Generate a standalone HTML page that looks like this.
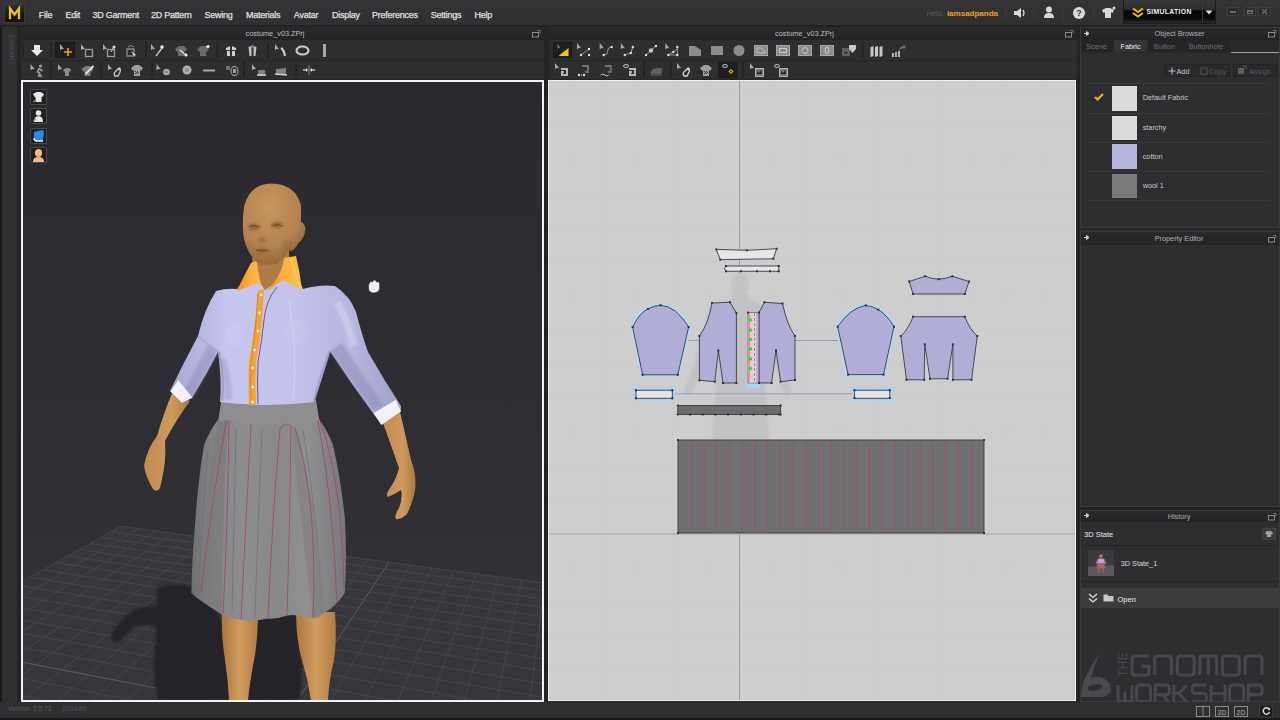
<!DOCTYPE html>
<html><head><meta charset="utf-8">
<style>
*{margin:0;padding:0;box-sizing:border-box}
html,body{width:1280px;height:720px;overflow:hidden;background:#2c2c2f;font-family:"Liberation Sans",sans-serif;color:#ddd}
.a{position:absolute}
.t{position:absolute;white-space:nowrap;line-height:1}

</style></head><body>
<div class="a" style="left:0px;top:0px;width:1280px;height:720px;background:#2a2a2d;"></div>
<div class="a" style="left:0px;top:0px;width:1280px;height:25px;background:linear-gradient(#343437,#303033);"></div>
<div class="a" style="left:0px;top:25px;width:1280px;height:2px;background:#232326;"></div>
<div class="a" style="left:4px;top:3px;width:21px;height:20px;background:linear-gradient(#333336,#1a1a1c 45%,#111113);border:1px solid #3c3c3e;"></div>
<svg class="a" style="left:4px;top:3px" width="21" height="20"><path d="M6 15 V5.5 L10.5 11.5 L15 5.5 V15" fill="none" stroke="#f4b82a" stroke-width="2.3" stroke-linejoin="miter" stroke-linecap="square"/></svg>
<span class="t" style="left:38.7px;top:10.68px;font-size:9px;color:#ececec;letter-spacing:-0.25px;-webkit-text-stroke:0.25px #d8d8d8;">File</span>
<span class="t" style="left:65.5px;top:10.68px;font-size:9px;color:#ececec;letter-spacing:-0.25px;-webkit-text-stroke:0.25px #d8d8d8;">Edit</span>
<span class="t" style="left:92.5px;top:10.68px;font-size:9px;color:#ececec;letter-spacing:-0.25px;-webkit-text-stroke:0.25px #d8d8d8;">3D Garment</span>
<span class="t" style="left:151px;top:10.68px;font-size:9px;color:#ececec;letter-spacing:-0.25px;-webkit-text-stroke:0.25px #d8d8d8;">2D Pattern</span>
<span class="t" style="left:204.5px;top:10.68px;font-size:9px;color:#ececec;letter-spacing:-0.25px;-webkit-text-stroke:0.25px #d8d8d8;">Sewing</span>
<span class="t" style="left:246px;top:10.68px;font-size:9px;color:#ececec;letter-spacing:-0.25px;-webkit-text-stroke:0.25px #d8d8d8;">Materials</span>
<span class="t" style="left:293.8px;top:10.68px;font-size:9px;color:#ececec;letter-spacing:-0.25px;-webkit-text-stroke:0.25px #d8d8d8;">Avatar</span>
<span class="t" style="left:332px;top:10.68px;font-size:9px;color:#ececec;letter-spacing:-0.25px;-webkit-text-stroke:0.25px #d8d8d8;">Display</span>
<span class="t" style="left:372px;top:10.68px;font-size:9px;color:#ececec;letter-spacing:-0.25px;-webkit-text-stroke:0.25px #d8d8d8;">Preferences</span>
<span class="t" style="left:430.8px;top:10.68px;font-size:9px;color:#ececec;letter-spacing:-0.25px;-webkit-text-stroke:0.25px #d8d8d8;">Settings</span>
<span class="t" style="left:474.5px;top:10.68px;font-size:9px;color:#ececec;letter-spacing:-0.25px;-webkit-text-stroke:0.25px #d8d8d8;">Help</span>
<span class="t" style="left:926.5px;top:10.74px;font-size:6.8px;color:#5c5c5e;">Hello,</span>
<span class="t" style="left:946.9px;top:10.03px;font-size:8px;color:#f0a020;font-weight:bold;">iamsadpanda</span>
<div class="a" style="left:1005px;top:6px;width:1px;height:14px;background:#39393c;"></div>
<div class="a" style="left:1033px;top:6px;width:1px;height:14px;background:#39393c;"></div>
<div class="a" style="left:1063px;top:6px;width:1px;height:14px;background:#39393c;"></div>
<div class="a" style="left:1093px;top:6px;width:1px;height:14px;background:#39393c;"></div>
<svg class="a" style="left:1012px;top:5px" width="16" height="16"><path d="M2 6h3l4-3v10l-4-3H2z" fill="#d8d8d8"/><path d="M11 5q2 3 0 6" stroke="#d8d8d8" fill="none" stroke-width="1.3"/></svg>
<svg class="a" style="left:1041px;top:4px" width="16" height="16"><circle cx="8" cy="5.5" r="3" fill="#d8d8d8"/><path d="M3 14q0-5 5-5t5 5z" fill="#d8d8d8"/></svg>
<svg class="a" style="left:1071px;top:5px" width="16" height="16"><circle cx="8" cy="8" r="6" fill="#d8d8d8"/><text x="8" y="11.3" font-size="9" font-weight="bold" text-anchor="middle" fill="#333" font-family="Liberation Sans">?</text></svg>
<svg class="a" style="left:1099px;top:5px" width="18" height="16"><path d="M3 5l4-2h4l4 2-1.5 3-1.5-.8V13H6V7.2l-1.5.8z" fill="#d8d8d8"/><circle cx="15" cy="3" r="1.5" fill="#d8d8d8"/></svg>
<div class="a" style="left:1123px;top:0px;width:93px;height:24px;background:linear-gradient(#38383b 0%,#2e2e31 40%,#050505 48%,#0a0a0a 80%,#2a2a2d 100%);border:1px solid #1c1c1e;border-top:none;"></div>
<div class="a" style="left:1202px;top:1px;width:1px;height:22px;background:#3a3a3d;"></div>
<svg class="a" style="left:1131px;top:7px" width="14" height="12"><path d="M2 1.5l5 3.5 5-3.5M2 6l5 3.5 5-3.5" fill="none" stroke="#f2b01e" stroke-width="2"/></svg>
<span class="t" style="left:1146.4px;top:9.44px;font-size:6.8px;color:#f2f2f2;font-weight:bold;letter-spacing:0.35px;">SIMULATION</span>
<svg class="a" style="left:1204px;top:9px" width="10" height="8"><path d="M1.5 1.5h7l-3.5 4z" fill="#ddd"/></svg>
<div class="a" style="left:1226.5px;top:7px;width:12.5px;height:9px;background:#2c2c2f;border:1px solid #3e3e41;"></div>
<div class="a" style="left:1243.5px;top:7px;width:12.5px;height:9px;background:#2c2c2f;border:1px solid #3e3e41;"></div>
<div class="a" style="left:1258px;top:7px;width:12.5px;height:9px;background:#2c2c2f;border:1px solid #3e3e41;"></div>
<div class="a" style="left:1229.5px;top:11px;width:6.5px;height:1.5px;background:#6a6a6c;"></div>
<div class="a" style="left:1246.5px;top:9.5px;width:6.5px;height:4.5px;background:transparent;border:1px solid #6a6a6c;border-top-width:2px;"></div>
<svg class="a" style="left:1258px;top:7px" width="13" height="9"><path d="M4 2l5 5M9 2l-5 5" stroke="#6a6a6c" stroke-width="1.2"/></svg>
<div class="a" style="left:0px;top:27px;width:2px;height:675px;background:#1b1b1d;"></div>
<div class="a" style="left:2px;top:27px;width:15px;height:675px;background:#303033;"></div>
<div class="a" style="left:17px;top:27px;width:4px;height:675px;background:#242427;"></div>
<span class="t" style="left:-8px;top:35px;font-size:6.8px;color:#4c4c4f;transform:rotate(90deg);transform-origin:left top;left:14px;letter-spacing:0.2px">LIBRARY</span>
<div class="a" style="left:21px;top:27px;width:523px;height:13px;background:linear-gradient(#2a2a2d,#232326);"></div>
<span class="t" style="left:175px;width:200px;text-align:center;top:30.12px;font-size:7.3px;color:#bcbcbe;">costume_v03.ZPrj</span>
<svg class="a" style="left:531px;top:29px" width="10" height="9"><rect x="1.5" y="3.5" width="6" height="4.5" fill="none" stroke="#8a8a8c"/><path d="M6 1.5h3v3" stroke="#8a8a8c" fill="none" stroke-width="0.8"/></svg>
<div class="a" style="left:548px;top:27px;width:529px;height:13px;background:linear-gradient(#2a2a2d,#232326);"></div>
<span class="t" style="left:704.5px;width:200px;text-align:center;top:30.12px;font-size:7.3px;color:#bcbcbe;">costume_v03.ZPrj</span>
<svg class="a" style="left:1064px;top:29px" width="10" height="9"><rect x="1.5" y="3.5" width="6" height="4.5" fill="none" stroke="#8a8a8c"/><path d="M6 1.5h3v3" stroke="#8a8a8c" fill="none" stroke-width="0.8"/></svg>
<div class="a" style="left:544px;top:27px;width:4px;height:675px;background:#242427;"></div>
<div class="a" style="left:1077px;top:27px;width:3px;height:675px;background:#242427;"></div>
<div class="a" style="left:21px;top:40px;width:523px;height:20px;background:#2e2e31;"></div>
<div class="a" style="left:21px;top:60px;width:523px;height:1px;background:#262629;"></div>
<div class="a" style="left:21px;top:61px;width:523px;height:18px;background:#2e2e31;"></div>
<div class="a" style="left:21px;top:79px;width:523px;height:1px;background:#262629;"></div>
<div class="a" style="left:22px;top:42px;width:2px;height:16px;background:#252528;"></div>
<div class="a" style="left:50px;top:42px;width:2px;height:16px;background:#252528;"></div>
<div class="a" style="left:145px;top:42px;width:2px;height:16px;background:#252528;"></div>
<div class="a" style="left:216px;top:42px;width:2px;height:16px;background:#252528;"></div>
<div class="a" style="left:267px;top:42px;width:2px;height:16px;background:#252528;"></div>
<div class="a" style="left:50px;top:62px;width:2px;height:16px;background:#252528;"></div>
<div class="a" style="left:100px;top:62px;width:2px;height:16px;background:#252528;"></div>
<div class="a" style="left:151px;top:62px;width:2px;height:16px;background:#252528;"></div>
<div class="a" style="left:243px;top:62px;width:2px;height:16px;background:#252528;"></div>
<div class="a" style="left:295px;top:62px;width:2px;height:16px;background:#252528;"></div>
<div class="a" style="left:548px;top:40px;width:529px;height:20px;background:#2e2e31;"></div>
<div class="a" style="left:548px;top:60px;width:529px;height:1px;background:#262629;"></div>
<div class="a" style="left:548px;top:61px;width:529px;height:18px;background:#2e2e31;"></div>
<div class="a" style="left:548px;top:79px;width:529px;height:1px;background:#262629;"></div>
<div class="a" style="left:548px;top:42px;width:2px;height:16px;background:#252528;"></div>
<div class="a" style="left:862px;top:42px;width:2px;height:16px;background:#252528;"></div>
<div class="a" style="left:548px;top:62px;width:2px;height:16px;background:#252528;"></div>
<div class="a" style="left:642.5px;top:62px;width:2px;height:16px;background:#252528;"></div>
<div class="a" style="left:670px;top:62px;width:2px;height:16px;background:#252528;"></div>
<div class="a" style="left:742px;top:62px;width:2px;height:16px;background:#252528;"></div>
<svg class="a" style="left:0;top:38px" width="1280" height="44" viewBox="0 38 1280 44">
<rect x="55.5" y="42.5" width="19" height="15" fill="#1f1f21" stroke="#18181a"/>
<rect x="553.5" y="42.5" width="18" height="15" fill="#1f1f21" stroke="#18181a"/>
<rect x="719" y="62.5" width="18" height="15" fill="#1f1f21" stroke="#18181a"/>
<g transform="translate(29,42)"><path d="M5 3h6v5h3l-6 6-6-6h3z" fill="#e8e8e8"/></g>
<g transform="translate(57,42)"><path d="M3 2 l0 6.5 l1.6 -1.5 l2.6 0.3z" fill="#a8a8aa"/><path d="M11 6v8M7 10h8" stroke="#f0a010" stroke-width="1.6"/></g>
<g transform="translate(79,42)"><path d="M2 2 l0 6.5 l1.6 -1.5 l2.6 0.3z" fill="#a8a8aa"/><rect x="6.5" y="7.5" width="7" height="7" fill="none" stroke="#9a9a9c" stroke-width="1.3"/></g>
<g transform="translate(101,42)"><path d="M2 2 l0 6.5 l1.6 -1.5 l2.6 0.3z" fill="#a8a8aa"/><rect x="6.5" y="7.5" width="7" height="7" fill="none" stroke="#9a9a9c" stroke-width="1.3"/><circle cx="13" cy="5" r="1.6" fill="#e0e0e0"/><path d="M10 10l3-5" stroke="#ccc"/></g>
<g transform="translate(122,42)"><path d="M5 14v-7h7v7z" fill="none" stroke="#8a8a8c" stroke-width="1.3"/><path d="M9 9l5 4-2 1z" fill="#e0e0e0"/><path d="M6 5q3-3 6 0" stroke="#8a8a8c" fill="none"/></g>
<g transform="translate(149,42)"><path d="M2 2 l0 6.5 l1.6 -1.5 l2.6 0.3z" fill="#a8a8aa"/><path d="M7 14l6-8" stroke="#c8c8ca" stroke-width="1.3"/><circle cx="13" cy="5" r="1.7" fill="#f0f0f0"/></g>
<g transform="translate(173,42)"><path d="M2 7l4-3h5l3 3-2 3-1-1v5H5v-5l-1 1z" fill="#6e6e70"/><path d="M7 8l6 5" stroke="#ddd" stroke-width="1.2"/><circle cx="13" cy="13" r="1.6" fill="#f0f0f0"/></g>
<g transform="translate(195,42)"><path d="M2 7l4-3h5l3 3-2 3-1-1v5H5v-5l-1 1z" fill="#6a6a6c"/><circle cx="13" cy="4.5" r="1.6" fill="#f0f0f0"/></g>
<g transform="translate(223,42)"><path d="M3 6l4-2v4H3zM9 4l4 2v2H9zM4 9h3v5H4zM9 9h3v5H9z" fill="#d0d0d2"/></g>
<g transform="translate(244.5,42)"><path d="M4 5l3-1v10H5zM9 4l3 1-1 9H9z" fill="#c0c0c2"/><path d="M7 3h2v3H7z" fill="#808082"/></g>
<g transform="translate(273,42)"><path d="M2 2 l0 6.5 l1.6 -1.5 l2.6 0.3z" fill="#a8a8aa"/><path d="M8 6q3 2 4 8" stroke="#c8c8ca" stroke-width="2.2" fill="none"/></g>
<g transform="translate(294.5,42)"><ellipse cx="8" cy="8.5" rx="6" ry="4" fill="none" stroke="#c8c8ca" stroke-width="2.2"/></g>
<g transform="translate(316.5,42)"><rect x="6.5" y="2" width="3" height="13" fill="#a8a8aa"/></g>
<g transform="translate(29.5,62)"><path d="M1 2 l0 6.5 l1.6 -1.5 l2.6 0.3z" fill="#a8a8aa"/><circle cx="11" cy="4" r="1.6" fill="#9c9c9e"/><path d="M10 6l-2 4 2 1-1 4M10 7l3 2M9 10l3 5" stroke="#9c9c9e" stroke-width="1.6" fill="none"/></g>
<g transform="translate(57,62)"><path d="M1 2 l0 6.5 l1.6 -1.5 l2.6 0.3z" fill="#a8a8aa"/><path d="M6 8l3-2h3l2 2-1 2-1-1v5H8V9l-1 1z" fill="#8a8a8c"/></g>
<g transform="translate(79.5,62)"><path d="M2 7l4-3h5l3 3-2 3-1-1v5H5v-5l-1 1z" fill="#7a7a7c"/><path d="M6 12l8-8" stroke="#e0e0e0" stroke-width="1.8"/></g>
<g transform="translate(107,62)"><path d="M1 2 l0 6.5 l1.6 -1.5 l2.6 0.3z" fill="#a8a8aa"/><path d="M8 14q-2-3 1-5l3-3q2 1 1 4l-2 4z" fill="none" stroke="#c8c8ca" stroke-width="1.4"/></g>
<g transform="translate(129,62)"><path d="M2 6l4-3h4l4 3-2 3-1-1v6H5V8l-1 1z" fill="#a0a0a2"/><path d="M6 9h1v1H6zM8 9h1v1H8zM7 10h1v1H7zM9 10h1v1H9zM6 11h1v1H6zM8 11h1v1H8z" fill="#333"/></g>
<g transform="translate(155.5,62)"><path d="M1 2 l0 6.5 l1.6 -1.5 l2.6 0.3z" fill="#a8a8aa"/><circle cx="11" cy="10" r="3.3" fill="#a8a8aa"/><path d="M9.5 10h3" stroke="#666"/></g>
<g transform="translate(179,62)"><circle cx="8" cy="8" r="4.5" fill="#b0b0b2"/><circle cx="7" cy="7" r="0.7" fill="#666"/><circle cx="9" cy="7" r="0.7" fill="#666"/><circle cx="7" cy="9" r="0.7" fill="#666"/><circle cx="9" cy="9" r="0.7" fill="#666"/></g>
<g transform="translate(201,62)"><path d="M2 8.5h12" stroke="#a8a8aa" stroke-width="2"/></g>
<g transform="translate(224,62)"><rect x="2" y="4" width="4" height="4" fill="#707072"/><ellipse cx="10.5" cy="9" rx="3.5" ry="4.5" fill="none" stroke="#909092" stroke-width="1.3"/><rect x="9" y="7" width="3" height="4" fill="#a0a0a2"/></g>
<g transform="translate(251,62)"><path d="M1 2 l0 6.5 l1.6 -1.5 l2.6 0.3z" fill="#a8a8aa"/><path d="M7 8h7v6H7z" fill="#808082"/><path d="M6 13h9" stroke="#d0d0d2" stroke-width="1.5"/></g>
<g transform="translate(273,62)"><path d="M3 7l10-1v7H3z" fill="#808082"/><path d="M2 12l12 1" stroke="#d0d0d2" stroke-width="1.6"/></g>
<g transform="translate(301,62)"><path d="M2 8h3M11 8h3" stroke="#c0c0c2" stroke-width="1.3"/><path d="M5 6v4l2-2zM11 6v4l-2-2z" fill="#e0e0e0"/><rect x="7.3" y="3" width="1.4" height="10" fill="#707072"/></g>
<g transform="translate(554.5,42)"><path d="M3 2l0 5 1-1 2 0z" fill="#707072"/><path d="M4 14L14 6v8z" fill="#f2c80c"/></g>
<g transform="translate(576,42)"><path d="M1 1 l0 6.5 l1.6 -1.5 l2.6 0.3z" fill="#a8a8aa"/><path d="M5 13l8-6" stroke="#9a9a9c"/><circle cx="5" cy="13" r="1.2" fill="#e0e0e0"/><circle cx="13" cy="7" r="1.2" fill="#e0e0e0"/><circle cx="13" cy="13" r="1.2" fill="#e0e0e0"/></g>
<g transform="translate(598.7,42)"><path d="M1 1 l0 6.5 l1.6 -1.5 l2.6 0.3z" fill="#a8a8aa"/><path d="M5 13q4 0 4-4t4-4" stroke="#9a9a9c" fill="none"/><circle cx="5" cy="13" r="1.2" fill="#e0e0e0"/><circle cx="13" cy="5" r="1.2" fill="#e0e0e0"/></g>
<g transform="translate(619.8,42)"><path d="M1 1 l0 6.5 l1.6 -1.5 l2.6 0.3z" fill="#a8a8aa"/><path d="M5 13l6-2 2-6" stroke="#9a9a9c" fill="none"/><circle cx="5" cy="13" r="1.2" fill="#e0e0e0"/><circle cx="11" cy="11" r="1.2" fill="#e0e0e0"/><circle cx="13" cy="5" r="1.2" fill="#e0e0e0"/></g>
<g transform="translate(643,42)"><path d="M3 13l10-9" stroke="#9a9a9c"/><circle cx="8" cy="8.5" r="2.3" fill="#c0c0c2"/><circle cx="3" cy="13" r="1.2" fill="#e0e0e0"/><circle cx="13" cy="4" r="1.2" fill="#e0e0e0"/></g>
<g transform="translate(664.3,42)"><path d="M1 1 l0 6.5 l1.6 -1.5 l2.6 0.3z" fill="#a8a8aa"/><path d="M4 13h9V5" stroke="#9a9a9c" fill="none"/><path d="M4 13l9-6" stroke="#9a9a9c"/><circle cx="4" cy="13" r="1.2" fill="#e0e0e0"/><circle cx="13" cy="13" r="1.2" fill="#e0e0e0"/><circle cx="13" cy="5" r="1.2" fill="#e0e0e0"/><circle cx="9" cy="10" r="1.2" fill="#e0e0e0"/></g>
<g transform="translate(687,42)"><path d="M2 4h6l6 4v6H2z" fill="#8c8c8e"/></g>
<g transform="translate(709,42)"><rect x="2" y="4" width="12" height="9" fill="#8c8c8e"/></g>
<g transform="translate(731,42)"><circle cx="8" cy="8.5" r="5.5" fill="#8c8c8e"/></g>
<g transform="translate(753,42)"><rect x="1.5" y="3.5" width="13" height="10" fill="#8a8a8c" stroke="#a8a8aa"/><path d="M4 6h4l4 3v2H4z" fill="none" stroke="#c0c0c2"/></g>
<g transform="translate(775,42)"><rect x="1.5" y="3.5" width="13" height="10" fill="#8a8a8c" stroke="#a8a8aa"/><rect x="4.5" y="6.5" width="7" height="4" fill="none" stroke="#c8c8ca"/></g>
<g transform="translate(797,42)"><rect x="1.5" y="3.5" width="13" height="10" fill="#8a8a8c" stroke="#a8a8aa"/><circle cx="8" cy="8.5" r="3" fill="none" stroke="#c8c8ca"/></g>
<g transform="translate(819,42)"><rect x="1.5" y="3.5" width="13" height="10" fill="#8a8a8c" stroke="#a8a8aa"/><ellipse cx="8" cy="8.5" rx="1.8" ry="3.3" fill="none" stroke="#d0d0d2"/></g>
<g transform="translate(841,42)"><rect x="1" y="6" width="8" height="8" fill="#606062"/><path d="M8 3h7v4l-3.5 4L8 7z" fill="#c8c8ca"/><path d="M3 10l2 2 2-2z" fill="#222"/></g>
<g transform="translate(868.5,42)"><path d="M2 5l3-1v10l-3 1zM6.5 5l3-1v10l-3 1zM11 5l3-1v10l-3 1z" fill="#c8c8ca"/></g>
<g transform="translate(890,42)"><path d="M2 11h2v4H2zM5 10h2v5H5zM8 9h2v6H8z" fill="#b0b0b2"/><path d="M9 8q1-4 5-4l-1-2 3 3-3 3 1-2q-3 0-4 2" fill="#707072"/></g>
<g transform="translate(554,62)"><path d="M1 1 l0 6.5 l1.6 -1.5 l2.6 0.3z" fill="#a8a8aa"/><path d="M7 7h6v6H8v-3h2" stroke="#b8b8ba" stroke-width="2" fill="none"/></g>
<g transform="translate(576,62)"><path d="M6 4h6v6H9" stroke="#707072" stroke-width="2" fill="none"/><circle cx="3" cy="13" r="1.2" fill="#e0e0e0"/><circle cx="8" cy="13" r="1.2" fill="#e0e0e0"/><path d="M3 13h5" stroke="#e0e0e0" stroke-dasharray="1 1"/></g>
<g transform="translate(598.7,62)"><path d="M6 4h6v6H9" stroke="#707072" stroke-width="2" fill="none"/><path d="M2 13q2-2 4 0t4 0" stroke="#d0d0d2" fill="none"/></g>
<g transform="translate(622,62)"><ellipse cx="4" cy="4" rx="2.5" ry="1.5" fill="none" stroke="#c0c0c2"/><path d="M7 7h6v6H8v-3h2" stroke="#b8b8ba" stroke-width="2" fill="none"/></g>
<g transform="translate(648.7,62)"><path d="M2 12q0-6 7-6h4v6z" fill="#606062"/><path d="M2 13h11" stroke="#4a4a4c" stroke-width="2"/></g>
<g transform="translate(676,62)"><path d="M1 1 l0 6.5 l1.6 -1.5 l2.6 0.3z" fill="#a8a8aa"/><path d="M8 14q-2-3 1-5l3-3q2 1 1 4l-2 4z" fill="none" stroke="#d0d0d2" stroke-width="1.4"/></g>
<g transform="translate(698,62)"><path d="M2 6l4-3h4l4 3-2 3-1-1v6H5V8l-1 1z" fill="#a0a0a2"/><path d="M6 9h1v1H6zM8 9h1v1H8zM7 10h1v1H7zM9 10h1v1H9zM6 11h1v1H6zM8 11h1v1H8z" fill="#333"/></g>
<g transform="translate(720,62)"><ellipse cx="5" cy="4" rx="2.5" ry="1.5" fill="none" stroke="#c0c0c2"/><path d="M11 7l2.5 2.5L11 12 8.5 9.5z" fill="#f2c80c"/><circle cx="11" cy="9.5" r="1" fill="#2a2a2a"/></g>
<g transform="translate(749,62)"><path d="M1 1 l0 6.5 l1.6 -1.5 l2.6 0.3z" fill="#a8a8aa"/><rect x="6.5" y="6.5" width="8" height="8" fill="#777" stroke="#b8b8ba"/><path d="M8 9l2 2 2-3 1 4H8z" fill="#222"/></g>
<g transform="translate(773,62)"><ellipse cx="4" cy="4" rx="2.5" ry="1.5" fill="none" stroke="#c0c0c2"/><rect x="6.5" y="6.5" width="8" height="8" fill="#777" stroke="#b8b8ba"/><path d="M8 9l2 2 2-3 1 4H8z" fill="#222"/></g>
</svg>
<div class="a" style="left:21px;top:80px;width:523px;height:622px;background:#f2f2f2;"></div>
<div class="a" style="left:23px;top:82px;width:519px;height:618px;background:linear-gradient(#2a2a2e,#2d2c32 40%,#302f34 70%,#333236);"></div>
<svg class="a" style="left:23px;top:82px" width="519" height="618" viewBox="23 82 519 618">
<defs>
<linearGradient id="skinL" x1="0" x2="1"><stop offset="0" stop-color="#a8763e"/><stop offset="0.5" stop-color="#d29c5e"/><stop offset="1" stop-color="#b07c44"/></linearGradient>
<linearGradient id="armL" x1="0" x2="1"><stop offset="0" stop-color="#c08a52"/><stop offset="0.6" stop-color="#cf9a5e"/><stop offset="1" stop-color="#a9773f"/></linearGradient>
<radialGradient id="headg" cx="0.42" cy="0.3" r="0.75"><stop offset="0" stop-color="#c8965e"/><stop offset="0.65" stop-color="#b38250"/><stop offset="1" stop-color="#8e6236"/></radialGradient>
<linearGradient id="shirtg" x1="0" x2="1"><stop offset="0" stop-color="#a6a6d2"/><stop offset="0.25" stop-color="#c6c6ee"/><stop offset="0.55" stop-color="#c2c2ea"/><stop offset="0.8" stop-color="#b4b4de"/><stop offset="1" stop-color="#a0a0cc"/></linearGradient>
<linearGradient id="skirtg" x1="0" x2="1"><stop offset="0" stop-color="#707072"/><stop offset="0.15" stop-color="#858587"/><stop offset="0.35" stop-color="#8e8e90"/><stop offset="0.55" stop-color="#888889"/><stop offset="0.75" stop-color="#909092"/><stop offset="1" stop-color="#78787a"/></linearGradient>
<linearGradient id="collarg" x1="0" x2="1"><stop offset="0" stop-color="#f08a1c"/><stop offset="0.5" stop-color="#ffb040"/><stop offset="1" stop-color="#f8c050"/></linearGradient>
<filter id="bl" x="-0.1" y="-0.1" width="1.2" height="1.2"><feGaussianBlur stdDeviation="0.45"/></filter>
<filter id="bl2"><feGaussianBlur stdDeviation="1.2"/></filter><filter id="bl3" x="-0.5" y="-0.5" width="2" height="2"><feGaussianBlur stdDeviation="1.5"/></filter>
<clipPath id="hc"><path d="M244.2 206 Q250 184 271.3 183.5 Q296 184 301 206 L301 222 Q303 221 305.6 228 Q305 238 298.4 243 Q293 253 288.4 250 Q282 262 275.8 264 L259.6 264.8 Q254 260 250.5 254.8 Q245 246 243.3 235 Q242 220 244.2 206Z"/></clipPath>
</defs>
<polygon points="120.8,526.3 1066.9,653.1 3541.5,2635.9 -620.7,940.5" fill="#37373b"/>
<g stroke-width="1" filter="url(#bl)"><line x1="120.8" y1="526.3" x2="-620.7" y2="940.5" stroke="#45454b"/><line x1="138.3" y1="528.6" x2="-587.8" y2="953.9" stroke="#45454b"/><line x1="156.0" y1="531.0" x2="-553.7" y2="967.8" stroke="#45454b"/><line x1="174.0" y1="533.4" x2="-518.3" y2="982.2" stroke="#45454b"/><line x1="192.2" y1="535.9" x2="-481.7" y2="997.1" stroke="#45454b"/><line x1="210.7" y1="538.3" x2="-443.6" y2="1012.6" stroke="#45454b"/><line x1="229.4" y1="540.9" x2="-404.1" y2="1028.7" stroke="#45454b"/><line x1="248.4" y1="543.4" x2="-363.1" y2="1045.5" stroke="#45454b"/><line x1="267.6" y1="546.0" x2="-320.4" y2="1062.8" stroke="#45454b"/><line x1="287.1" y1="548.6" x2="-276.0" y2="1080.9" stroke="#45454b"/><line x1="306.9" y1="551.2" x2="-229.7" y2="1099.8" stroke="#45454b"/><line x1="327.0" y1="553.9" x2="-181.4" y2="1119.4" stroke="#45454b"/><line x1="347.4" y1="556.7" x2="-131.1" y2="1139.9" stroke="#45454b"/><line x1="368.0" y1="559.4" x2="-78.5" y2="1161.4" stroke="#45454b"/><line x1="389.0" y1="562.2" x2="-23.6" y2="1183.7" stroke="#5e5e64"/><line x1="410.3" y1="565.1" x2="33.9" y2="1207.2" stroke="#45454b"/><line x1="431.9" y1="568.0" x2="94.2" y2="1231.7" stroke="#45454b"/><line x1="453.8" y1="570.9" x2="157.4" y2="1257.4" stroke="#45454b"/><line x1="476.0" y1="573.9" x2="223.7" y2="1284.5" stroke="#45454b"/><line x1="498.6" y1="576.9" x2="293.4" y2="1312.9" stroke="#45454b"/><line x1="521.5" y1="580.0" x2="366.8" y2="1342.8" stroke="#45454b"/><line x1="544.8" y1="583.1" x2="444.2" y2="1374.3" stroke="#45454b"/><line x1="568.4" y1="586.3" x2="525.8" y2="1407.5" stroke="#45454b"/><line x1="592.4" y1="589.5" x2="612.1" y2="1442.7" stroke="#45454b"/><line x1="616.8" y1="592.8" x2="703.5" y2="1479.9" stroke="#45454b"/><line x1="641.6" y1="596.1" x2="800.4" y2="1519.4" stroke="#45454b"/><line x1="666.8" y1="599.5" x2="903.3" y2="1561.3" stroke="#45454b"/><line x1="692.3" y1="602.9" x2="1012.9" y2="1605.9" stroke="#45454b"/><line x1="718.3" y1="606.4" x2="1129.7" y2="1653.5" stroke="#45454b"/><line x1="744.8" y1="609.9" x2="1254.7" y2="1704.4" stroke="#45454b"/><line x1="771.6" y1="613.5" x2="1388.5" y2="1758.9" stroke="#45454b"/><line x1="798.9" y1="617.2" x2="1532.2" y2="1817.5" stroke="#45454b"/><line x1="826.7" y1="620.9" x2="1686.9" y2="1880.5" stroke="#45454b"/><line x1="854.9" y1="624.7" x2="1853.9" y2="1948.5" stroke="#45454b"/><line x1="883.7" y1="628.6" x2="2034.9" y2="2022.2" stroke="#45454b"/><line x1="912.9" y1="632.5" x2="2231.6" y2="2102.3" stroke="#45454b"/><line x1="942.6" y1="636.5" x2="2446.0" y2="2189.7" stroke="#45454b"/><line x1="972.9" y1="640.5" x2="2680.9" y2="2285.4" stroke="#45454b"/><line x1="1003.6" y1="644.6" x2="2939.1" y2="2390.6" stroke="#45454b"/><line x1="1035.0" y1="648.8" x2="3224.5" y2="2506.8" stroke="#45454b"/><line x1="1066.9" y1="653.1" x2="3541.5" y2="2635.9" stroke="#45454b"/><line x1="120.8" y1="526.3" x2="1066.9" y2="653.1" stroke="#45454b"/><line x1="111.1" y1="531.7" x2="1080.7" y2="664.2" stroke="#45454b"/><line x1="101.0" y1="537.4" x2="1095.4" y2="675.9" stroke="#45454b"/><line x1="90.4" y1="543.3" x2="1110.9" y2="688.4" stroke="#45454b"/><line x1="79.3" y1="549.5" x2="1127.4" y2="701.6" stroke="#45454b"/><line x1="67.8" y1="555.9" x2="1145.0" y2="715.7" stroke="#45454b"/><line x1="55.7" y1="562.7" x2="1163.8" y2="730.7" stroke="#45454b"/><line x1="43.0" y1="569.7" x2="1183.8" y2="746.8" stroke="#45454b"/><line x1="29.7" y1="577.2" x2="1205.3" y2="764.1" stroke="#45454b"/><line x1="15.8" y1="585.0" x2="1228.5" y2="782.6" stroke="#45454b"/><line x1="1.1" y1="593.2" x2="1253.4" y2="802.5" stroke="#45454b"/><line x1="-14.4" y1="601.8" x2="1280.3" y2="824.1" stroke="#45454b"/><line x1="-30.6" y1="610.9" x2="1309.4" y2="847.5" stroke="#45454b"/><line x1="-47.9" y1="620.5" x2="1341.1" y2="872.9" stroke="#45454b"/><line x1="-66.1" y1="630.7" x2="1375.7" y2="900.6" stroke="#45454b"/><line x1="-85.3" y1="641.4" x2="1413.7" y2="931.0" stroke="#5e5e64"/><line x1="-105.8" y1="652.9" x2="1455.5" y2="964.5" stroke="#45454b"/><line x1="-127.5" y1="665.0" x2="1501.7" y2="1001.5" stroke="#45454b"/><line x1="-150.7" y1="677.9" x2="1553.0" y2="1042.7" stroke="#45454b"/><line x1="-175.4" y1="691.7" x2="1610.5" y2="1088.7" stroke="#45454b"/><line x1="-201.8" y1="706.5" x2="1675.2" y2="1140.6" stroke="#45454b"/><line x1="-230.1" y1="722.3" x2="1748.7" y2="1199.4" stroke="#45454b"/><line x1="-260.5" y1="739.3" x2="1832.8" y2="1266.8" stroke="#45454b"/><line x1="-293.3" y1="757.6" x2="1929.9" y2="1344.6" stroke="#45454b"/><line x1="-328.8" y1="777.4" x2="2043.5" y2="1435.7" stroke="#45454b"/><line x1="-367.2" y1="798.9" x2="2178.0" y2="1543.4" stroke="#45454b"/><line x1="-409.0" y1="822.2" x2="2339.9" y2="1673.1" stroke="#45454b"/><line x1="-454.6" y1="847.7" x2="2538.4" y2="1832.2" stroke="#45454b"/><line x1="-504.7" y1="875.7" x2="2787.4" y2="2031.8" stroke="#45454b"/><line x1="-559.8" y1="906.5" x2="3109.4" y2="2289.7" stroke="#45454b"/><line x1="-620.7" y1="940.5" x2="3541.5" y2="2635.9" stroke="#45454b"/></g>
<g fill="#222225" filter="url(#bl2)" opacity="0.9"><path d="M157 588 Q178 580 198 590 Q214 600 222 622 L228 700 L158 700 Q151 670 156 640 Q157 620 157 588Z"/><path d="M158 606 Q140 604 126 616 Q114 627 111 636 Q113 644 120 641 Q127 631 137 626 Q150 622 159 628Z"/><path d="M255 620 Q283 638 302 662 L300 698 L286 698 Q272 662 255 642Z"/><path d="M222 615 L300 615 L300 700 L222 700Z"/></g>
<path d="M222 612 L258 612 Q258 635 255 655 Q250 680 248 700 L229 700 Q228 680 225 660 Q221 635 222 612Z" fill="url(#skinL)"/>
<path d="M296 612 L335 612 Q337 640 334 660 Q329 680 328 700 L311 700 Q308 680 302 660 Q296 640 296 612Z" fill="url(#skinL)"/>
<path d="M173 391 L190 401 Q176 420 165 441 Q166 456 164 468 Q162 480 160 488 Q157 493 153 489 Q146 478 144 466 Q147 449 157 436 Q164 412 173 391Z" fill="url(#armL)"/>
<path d="M383 423 L400 412 Q406 437 411 460 Q417 475 415 491 Q412 505 406.7 514.5 Q400 520 396 519 Q394 516 399 508 Q403 498 401 490 Q395 494 388 497 Q385 495 390 488 Q396 480 399 468 Q392 448 383 423Z" fill="url(#armL)"/>
<path d="M218.5 419 L319 419 Q328 432 333 445 Q341 480 345 520 Q347 560 344.7 593 Q336 606 325.6 612 Q318 619 313 618.6 Q300 614 287 615.4 Q278 619 268 618.6 Q252 622 241 620 Q230 618 223 615.4 Q212 608 204 602.7 Q196 598 191.4 593 Q192 560 194.6 530 Q198 480 204 445 Q210 430 218.5 419Z" fill="url(#skirtg)"/>
<g fill="none" stroke="#6e6e70" stroke-width="1" opacity="0.7"><path d="M236 430 Q234 520 232 612"/><path d="M262 430 Q258 520 255 618"/><path d="M303 430 Q318 520 322 612"/><path d="M208 450 Q202 520 198 596"/></g>
<path d="M228 422 Q222 520 222 614 L204 603 Q200 520 218 421Z" fill="#7a7a7c" opacity="0.7"/>
<path d="M292 426 Q300 520 313 618 L325 612 Q320 520 296 428Z" fill="#7e7e80" opacity="0.6"/>
<path d="M221.7 398.2 Q268 403 316 399.8 L319 419 Q300 426 281 425 Q250 424 218.5 419Z" fill="#8e8e90"/>
<g fill="none" stroke="#a8406a" stroke-width="0.8"><path d="M226.5 420 Q212 500 201 592"/><path d="M229 421 Q228 520 223 614"/><path d="M251 424 Q246 520 241 619"/><path d="M280 429 Q285 421 291 426"/><path d="M280 429 Q272 520 268 618"/><path d="M291 426 Q290 520 287 615"/><path d="M295 428 Q318 500 313 618"/><path d="M318 421 Q333 500 337 603"/><path d="M320 421 Q342 480 344 590"/></g>
<path d="M216 291 Q226 288 237 289 L257 265 L290 257 L303 289 Q320 284 335 286 Q350 296 356 312 Q362 335 368 352 Q384 380 401 406 L401 411 L381 424 L373 413 Q350 382 330 351 Q322 380 314 402 Q268 408 220 402 Q222 380 218 352 Q206 375 192 398 L182 403 L170 391 Q184 362 198 336 Q204 310 216 291Z" fill="url(#shirtg)"/>
<path d="M219 352 Q225 380 222 401" stroke="#9090bc" stroke-width="2.5" fill="none" opacity="0.6"/>
<path d="M330 351 Q319 380 314 401" stroke="#9090bc" stroke-width="2.5" fill="none" opacity="0.6"/>
<path d="M198 336 Q208 345 218 352" stroke="#9494c0" stroke-width="1.5" fill="none" opacity="0.5"/>
<path d="M289 300 Q298 350 293 401" stroke="#dcdcf8" stroke-width="1" fill="none" opacity="0.6"/>
<ellipse cx="236" cy="335" rx="10" ry="12" fill="#d4d4f6" opacity="0.25"/>
<ellipse cx="296" cy="332" rx="12" ry="12" fill="#d4d4f6" opacity="0.2"/>
<g filter="url(#bl3)"><path d="M330 351 Q350 380 374 411 L384 405 Q360 372 342 343Z" fill="#8a8ab6" opacity="0.55"/><path d="M218 352 Q206 375 192 398 L183 392 Q196 368 208 345Z" fill="#8a8ab6" opacity="0.55"/><path d="M340 300 Q352 320 358 345 L350 348 Q344 322 334 304Z" fill="#dedef8" opacity="0.45"/><path d="M220 360 Q226 385 224 400 L232 400 Q232 380 226 358Z" fill="#9a9ac6" opacity="0.5"/></g>
<path d="M170.6 391.5 L178.4 380.2 L192.3 397.6 L181.9 402.8Z" fill="#f2f2f6"/>
<path d="M373.6 413.3 L396 399.7 L400.9 411.4 L381.4 425Z" fill="#f2f2f6"/>
<path d="M252 258 L289 250 Q289 265 291 272 L265 290 L254 274Z" fill="#ad7c46"/>
<path d="M251 263 Q244 276 236.7 290.7 Q248 287 259 282.4 L264 292 Q258 278 257 261Z" fill="url(#collarg)"/>
<path d="M284 258 L296 256 Q300 272 302 290.7 Q292 284 282.8 280 L266 292 Q283 274 284 258Z" fill="url(#collarg)"/>
<path d="M290 258 Q296 272 300 288" stroke="#ffd070" stroke-width="1.5" fill="none" opacity="0.7"/>
<path d="M258 291 L264 289 Q262 330 256 362 Q255 385 256 404 L249 404 Q248 385 249 362 Q255 330 258 291Z" fill="#f5a332"/>
<path d="M258 293 Q256 330 251 362 Q250 385 251 404" stroke="#d07820" stroke-width="0.7" fill="none"/>
<path d="M277 287 Q266 300 264 320 Q262 340 258 362 Q257 385 258 404" stroke="#7a4070" stroke-width="0.9" fill="none"/>
<circle cx="261" cy="295" r="1.4" fill="#f4f4f4"/>
<circle cx="259.5" cy="313" r="1.4" fill="#f4f4f4"/>
<circle cx="258" cy="331" r="1.4" fill="#f4f4f4"/>
<circle cx="254.5" cy="350" r="1.4" fill="#f4f4f4"/>
<circle cx="252.5" cy="368" r="1.4" fill="#f4f4f4"/>
<circle cx="252.5" cy="387" r="1.4" fill="#f4f4f4"/>
<circle cx="252.5" cy="402" r="1.4" fill="#f4f4f4"/>
<path d="M244.2 206 Q250 184 271.3 183.5 Q296 184 301 206 L301 222 Q303 221 305.6 228 Q305 238 298.4 243 Q293 253 288.4 250 Q282 262 275.8 264 L259.6 264.8 Q254 260 250.5 254.8 Q245 246 243.3 235 Q242 220 244.2 206Z" fill="url(#headg)"/>
<g clip-path="url(#hc)"><g filter="url(#bl3)" opacity="0.8"><ellipse cx="254" cy="227" rx="5.5" ry="3.2" fill="#875a32"/><ellipse cx="277" cy="225" rx="5.5" ry="3.2" fill="#875a32"/><ellipse cx="262" cy="240" rx="3.5" ry="2.5" fill="#8e6238"/><ellipse cx="262" cy="250" rx="5.5" ry="2" fill="#8a5a32"/><ellipse cx="288" cy="248" rx="6" ry="8" fill="#94663a" opacity="0.6"/></g></g>
<path d="M249 227 Q254 224 260 227 M271 226 Q277 223 283 226" stroke="#5e4024" stroke-width="1" fill="none" opacity="0.75"/>
<path d="M256 250 Q262 252 269 250" stroke="#5e3e22" stroke-width="1" fill="none" opacity="0.75"/>
<path d="M368.5 289 Q368 284 370 282 Q371 280.5 372.5 282 Q373 279.5 375 280 Q376.5 280.5 376.5 282 Q378.5 281 379.5 283 Q380 286 379.5 289 Q379 292.5 374.5 293 Q369 293 368.5 289Z" fill="#efefef" stroke="#1c1c1e" stroke-width="0.6"/>
</svg>
<div class="a" style="left:30px;top:89px;width:17px;height:16px;background:#202022;border:1px solid #4a4a4d;border-radius:1px"></div>
<div class="a" style="left:30px;top:108px;width:17px;height:16px;background:#202022;border:1px solid #4a4a4d;border-radius:1px"></div>
<div class="a" style="left:30px;top:127.5px;width:17px;height:16px;background:#202022;border:1px solid #4a4a4d;border-radius:1px"></div>
<div class="a" style="left:30px;top:147px;width:17px;height:16px;background:#202022;border:1px solid #4a4a4d;border-radius:1px"></div>
<svg class="a" style="left:30px;top:89px" width="17" height="16"><path d="M3 5l3.5-2h4L14 5l-1.5 3-1-.6V13H5.5V7.4l-1 .6z" fill="#e8e8e8"/><path d="M3 13l3-2" stroke="#888" stroke-width="1.2"/></svg>
<svg class="a" style="left:30px;top:108px" width="17" height="16"><circle cx="8.5" cy="5" r="2.8" fill="#e8e8e8"/><path d="M4 14q0-6 4.5-6t4.5 6z" fill="#e8e8e8"/><path d="M3 13l3-2" stroke="#888" stroke-width="1.2"/></svg>
<svg class="a" style="left:30px;top:127.5px" width="17" height="16"><path d="M4 4l8-2 2 1-1 9H4z" fill="#1e8cf0"/><path d="M4 10q0 3 3 3h6" stroke="#fff" stroke-width="1.3" fill="none"/></svg>
<svg class="a" style="left:30px;top:147px" width="17" height="16"><ellipse cx="8.5" cy="6" rx="3.5" ry="4" fill="#f4b888"/><path d="M3 15q0-5 5.5-5t5.5 5z" fill="#f4b888"/></svg>
<div class="a" style="left:548px;top:80px;width:528px;height:621px;background:#eeeeee;"></div>
<div class="a" style="left:549px;top:81px;width:526px;height:619px;background:#cececf;"></div>
<svg class="a" style="left:549px;top:81px" width="526" height="619" viewBox="549 81 526 619">
<defs><filter id="pb"><feGaussianBlur stdDeviation="0.3"/></filter><filter id="gb2"><feGaussianBlur stdDeviation="1.5"/></filter></defs>
<line x1="572.1" y1="81" x2="572.1" y2="700" stroke="#cbcbcc"/><line x1="605.6" y1="81" x2="605.6" y2="700" stroke="#cbcbcc"/><line x1="639.1" y1="81" x2="639.1" y2="700" stroke="#cbcbcc"/><line x1="672.6" y1="81" x2="672.6" y2="700" stroke="#cbcbcc"/><line x1="706.1" y1="81" x2="706.1" y2="700" stroke="#cbcbcc"/><line x1="773.1" y1="81" x2="773.1" y2="700" stroke="#cbcbcc"/><line x1="806.6" y1="81" x2="806.6" y2="700" stroke="#cbcbcc"/><line x1="840.1" y1="81" x2="840.1" y2="700" stroke="#cbcbcc"/><line x1="873.6" y1="81" x2="873.6" y2="700" stroke="#cbcbcc"/><line x1="907.1" y1="81" x2="907.1" y2="700" stroke="#cbcbcc"/><line x1="940.6" y1="81" x2="940.6" y2="700" stroke="#cbcbcc"/><line x1="974.1" y1="81" x2="974.1" y2="700" stroke="#cbcbcc"/><line x1="1007.6" y1="81" x2="1007.6" y2="700" stroke="#cbcbcc"/><line x1="1041.1" y1="81" x2="1041.1" y2="700" stroke="#cbcbcc"/><line x1="1074.6" y1="81" x2="1074.6" y2="700" stroke="#cbcbcc"/><line x1="549" y1="670" x2="1075" y2="670" stroke="#c9c9cb"/><line x1="549" y1="636" x2="1075" y2="636" stroke="#c9c9cb"/><line x1="549" y1="602" x2="1075" y2="602" stroke="#c9c9cb"/><line x1="549" y1="568" x2="1075" y2="568" stroke="#c9c9cb"/><line x1="549" y1="500" x2="1075" y2="500" stroke="#c9c9cb"/><line x1="549" y1="466" x2="1075" y2="466" stroke="#c9c9cb"/><line x1="549" y1="432" x2="1075" y2="432" stroke="#c9c9cb"/><line x1="549" y1="398" x2="1075" y2="398" stroke="#c9c9cb"/><line x1="549" y1="364" x2="1075" y2="364" stroke="#c9c9cb"/><line x1="549" y1="330" x2="1075" y2="330" stroke="#c9c9cb"/><line x1="549" y1="296" x2="1075" y2="296" stroke="#c9c9cb"/><line x1="549" y1="262" x2="1075" y2="262" stroke="#c9c9cb"/><line x1="549" y1="228" x2="1075" y2="228" stroke="#c9c9cb"/><line x1="549" y1="194" x2="1075" y2="194" stroke="#c9c9cb"/><line x1="549" y1="160" x2="1075" y2="160" stroke="#c9c9cb"/><line x1="549" y1="126" x2="1075" y2="126" stroke="#c9c9cb"/><line x1="549" y1="92" x2="1075" y2="92" stroke="#c9c9cb"/>
<line x1="739.5" y1="81" x2="739.5" y2="700" stroke="#9c9ca0" stroke-width="1"/>
<line x1="549" y1="534" x2="1075" y2="534" stroke="#a4a4a8" stroke-width="1"/>
<g fill="#c2c2c4" filter="url(#gb2)"><ellipse cx="740" cy="284" rx="9" ry="11"/><path d="M733 293 L748 293 L750 300 Q762 302 768 312 L778 345 L792 392 L786 398 L772 360 L766 340 L764 380 L770 440 L712 440 L716 380 L714 340 L706 362 L690 396 L684 392 L700 345 L708 312 Q716 302 730 300Z"/><path d="M714 440 L766 440 L770 534 L712 534Z" opacity="0.85"/></g>
<line x1="688" y1="340.5" x2="699" y2="340.5" stroke="#8aa0c0" stroke-width="1"/>
<line x1="795" y1="340.5" x2="838" y2="340.5" stroke="#8aa0c0" stroke-width="1"/>
<line x1="672" y1="393.8" x2="854" y2="393.8" stroke="#8aa0c0" stroke-width="1"/>
<path d="M632.6 327 Q640 312 648 309 Q654 305.5 660.6 305.3 Q676 306 688.6 327 L677.8 374.8 L642.6 374.8Z" fill="none" stroke="#b0daf8" stroke-width="4" stroke-linejoin="round"/>
<path d="M632.6 327 Q640 312 648 309 Q654 305.5 660.6 305.3 Q676 306 688.6 327 L677.8 374.8 L642.6 374.8Z" fill="#b0aed6" stroke="#3a3a48" stroke-width="0.9"/>
<path d="M837.7 326.7 Q850 308 865.8 305.4 Q872 306 878.3 309.6 Q888 316 894 326.7 L883.5 374.6 L848.1 374.6Z" fill="none" stroke="#b0daf8" stroke-width="4" stroke-linejoin="round"/>
<path d="M837.7 326.7 Q850 308 865.8 305.4 Q872 306 878.3 309.6 Q888 316 894 326.7 L883.5 374.6 L848.1 374.6Z" fill="#b0aed6" stroke="#3a3a48" stroke-width="0.9"/>
<path d="M712 303 L730 302.3 L736.4 313.1 L736.4 383 L723 383 L718.4 350.5 L714.8 381.7 L699.4 380.3 L699.4 336 Q708 325 712 303Z" fill="#b0aed6" stroke="#3a3a48" stroke-width="0.9"/>
<path d="M764.4 302.3 L782.5 303.5 Q787 325 795 336 L795 380 L780.6 381.7 L776 350.5 L771.6 383 L759 383 L759 312.6 L764.4 302.3Z" fill="#b0aed6" stroke="#3a3a48" stroke-width="0.9"/>
<rect x="746.4" y="383" width="13.6" height="5.4" fill="#a8d8f0"/>
<rect x="748" y="312.6" width="11" height="70.4" fill="#e6d4dc" stroke="#505058" stroke-width="0.6"/>
<rect x="748.5" y="313" width="4" height="70" fill="#f0c4cc"/>
<line x1="749" y1="313" x2="749" y2="383" stroke="#c05070" stroke-width="0.7"/>
<line x1="754.5" y1="313" x2="754.5" y2="383" stroke="#8a8a92" stroke-width="1" stroke-dasharray="3 2"/>
<rect x="756" y="313" width="3" height="70" fill="#b8b4d8"/>
<line x1="758.5" y1="313" x2="758.5" y2="383" stroke="#b05070" stroke-width="0.7"/>
<circle cx="750.5" cy="320" r="1.7" fill="#28dc28"/>
<circle cx="750.5" cy="330" r="1.7" fill="#28dc28"/>
<circle cx="750.5" cy="339.5" r="1.7" fill="#28dc28"/>
<circle cx="750.5" cy="349" r="1.7" fill="#28dc28"/>
<circle cx="750.5" cy="359" r="1.7" fill="#28dc28"/>
<circle cx="750.5" cy="368.5" r="1.7" fill="#28dc28"/>
<path d="M909.2 281.5 L925.2 276.25 Q932 279 938.75 279.2 Q945 279 952.3 276.25 L969 281.5 L964.8 294 L913.1 294Z" fill="#b0aed6" stroke="#3a3a48" stroke-width="0.9"/>
<path d="M913.1 316.7 L964.8 316.7 Q970 330 977.3 336 L971.5 379.8 L952.9 379.8 L952.9 344.4 L947.5 378.75 L930 378.75 L924.8 344.4 L924.2 379.8 L906.5 379.8 L900.8 336 Q908 330 913.1 316.7Z" fill="#b0aed6" stroke="#3a3a48" stroke-width="0.9"/>
<path d="M716.25 249.4 L746.9 250.3 L776.6 248.75 L773.4 258.75 L720.3 259.7Z" fill="#e6e6e8" stroke="#3a3a44" stroke-width="0.9"/>
<path d="M726 266 L778.75 266 L778.75 271.25 L726 271.25 Q723 268.6 726 266Z" fill="#e6e6e8" stroke="#3a3a44" stroke-width="0.9"/>
<rect x="634.5" y="388.7" width="39.299999999999955" height="11.1" fill="none" stroke="#a8d4f8" stroke-width="2.5"/>
<rect x="636" y="390.2" width="36.299999999999955" height="8.1" fill="#e4e4e6" stroke="#3a3a44" stroke-width="0.9"/>
<rect x="852.9" y="388.7" width="38.39999999999998" height="11.1" fill="none" stroke="#a8d4f8" stroke-width="2.5"/>
<rect x="854.4" y="390.2" width="35.39999999999998" height="8.1" fill="#e4e4e6" stroke="#3a3a44" stroke-width="0.9"/>
<rect x="677.8" y="405.5" width="102.8" height="9" fill="#6c6c6e" stroke="#3a3a3e" stroke-width="0.9"/>
<rect x="678" y="440" width="306" height="93" fill="#707072" stroke="#3c3c40" stroke-width="0.9"/>
<line x1="691.3" y1="440.5" x2="691.3" y2="532.5" stroke="#a04c6c" stroke-width="0.9"/><line x1="704.0" y1="440.5" x2="704.0" y2="532.5" stroke="#a04c6c" stroke-width="0.9"/><line x1="716.8" y1="440.5" x2="716.8" y2="532.5" stroke="#a04c6c" stroke-width="0.9"/><line x1="729.5" y1="440.5" x2="729.5" y2="532.5" stroke="#a04c6c" stroke-width="0.9"/><line x1="742.2" y1="440.5" x2="742.2" y2="532.5" stroke="#a04c6c" stroke-width="0.9"/><line x1="754.9" y1="440.5" x2="754.9" y2="532.5" stroke="#a04c6c" stroke-width="0.9"/><line x1="767.7" y1="440.5" x2="767.7" y2="532.5" stroke="#a04c6c" stroke-width="0.9"/><line x1="780.4" y1="440.5" x2="780.4" y2="532.5" stroke="#a04c6c" stroke-width="0.9"/><line x1="793.1" y1="440.5" x2="793.1" y2="532.5" stroke="#a04c6c" stroke-width="0.9"/><line x1="805.9" y1="440.5" x2="805.9" y2="532.5" stroke="#a04c6c" stroke-width="0.9"/><line x1="818.6" y1="440.5" x2="818.6" y2="532.5" stroke="#a04c6c" stroke-width="0.9"/><line x1="831.3" y1="440.5" x2="831.3" y2="532.5" stroke="#a04c6c" stroke-width="0.9"/><line x1="844.1" y1="440.5" x2="844.1" y2="532.5" stroke="#a04c6c" stroke-width="0.9"/><line x1="856.8" y1="440.5" x2="856.8" y2="532.5" stroke="#a04c6c" stroke-width="0.9"/><line x1="869.5" y1="440.5" x2="869.5" y2="532.5" stroke="#a04c6c" stroke-width="0.9"/><line x1="882.2" y1="440.5" x2="882.2" y2="532.5" stroke="#a04c6c" stroke-width="0.9"/><line x1="895.0" y1="440.5" x2="895.0" y2="532.5" stroke="#a04c6c" stroke-width="0.9"/><line x1="907.7" y1="440.5" x2="907.7" y2="532.5" stroke="#a04c6c" stroke-width="0.9"/><line x1="920.4" y1="440.5" x2="920.4" y2="532.5" stroke="#a04c6c" stroke-width="0.9"/><line x1="933.2" y1="440.5" x2="933.2" y2="532.5" stroke="#a04c6c" stroke-width="0.9"/><line x1="945.9" y1="440.5" x2="945.9" y2="532.5" stroke="#a04c6c" stroke-width="0.9"/><line x1="958.6" y1="440.5" x2="958.6" y2="532.5" stroke="#a04c6c" stroke-width="0.9"/><line x1="971.4" y1="440.5" x2="971.4" y2="532.5" stroke="#a04c6c" stroke-width="0.9"/>
<rect x="631.6" y="326" width="2" height="2" fill="#303038"/><rect x="647" y="308" width="2" height="2" fill="#303038"/><rect x="659.6" y="304.3" width="2" height="2" fill="#303038"/><rect x="687.6" y="326" width="2" height="2" fill="#303038"/><rect x="676.8" y="373.8" width="2" height="2" fill="#303038"/><rect x="641.6" y="373.8" width="2" height="2" fill="#303038"/><rect x="836.7" y="325.7" width="2" height="2" fill="#303038"/><rect x="864.8" y="304.4" width="2" height="2" fill="#303038"/><rect x="877.3" y="308.6" width="2" height="2" fill="#303038"/><rect x="893" y="325.7" width="2" height="2" fill="#303038"/><rect x="882.5" y="373.6" width="2" height="2" fill="#303038"/><rect x="847.1" y="373.6" width="2" height="2" fill="#303038"/><rect x="711" y="302" width="2" height="2" fill="#303038"/><rect x="729" y="301.3" width="2" height="2" fill="#303038"/><rect x="735.4" y="312.1" width="2" height="2" fill="#303038"/><rect x="735.4" y="382" width="2" height="2" fill="#303038"/><rect x="722" y="382" width="2" height="2" fill="#303038"/><rect x="717.4" y="349.5" width="2" height="2" fill="#303038"/><rect x="713.8" y="380.7" width="2" height="2" fill="#303038"/><rect x="698.4" y="379.3" width="2" height="2" fill="#303038"/><rect x="698.4" y="335" width="2" height="2" fill="#303038"/><rect x="763.4" y="301.3" width="2" height="2" fill="#303038"/><rect x="781.5" y="302.5" width="2" height="2" fill="#303038"/><rect x="794" y="335" width="2" height="2" fill="#303038"/><rect x="794" y="379" width="2" height="2" fill="#303038"/><rect x="779.6" y="380.7" width="2" height="2" fill="#303038"/><rect x="775" y="349.5" width="2" height="2" fill="#303038"/><rect x="770.6" y="382" width="2" height="2" fill="#303038"/><rect x="758" y="382" width="2" height="2" fill="#303038"/><rect x="747" y="311.6" width="2" height="2" fill="#303038"/><rect x="758" y="311.6" width="2" height="2" fill="#303038"/><rect x="908.2" y="280.5" width="2" height="2" fill="#303038"/><rect x="924.2" y="275.25" width="2" height="2" fill="#303038"/><rect x="937.75" y="278.2" width="2" height="2" fill="#303038"/><rect x="951.3" y="275.25" width="2" height="2" fill="#303038"/><rect x="968" y="280.5" width="2" height="2" fill="#303038"/><rect x="963.8" y="293" width="2" height="2" fill="#303038"/><rect x="912.1" y="293" width="2" height="2" fill="#303038"/><rect x="912.1" y="315.7" width="2" height="2" fill="#303038"/><rect x="963.8" y="315.7" width="2" height="2" fill="#303038"/><rect x="976.3" y="335" width="2" height="2" fill="#303038"/><rect x="970.5" y="378.8" width="2" height="2" fill="#303038"/><rect x="951.9" y="378.8" width="2" height="2" fill="#303038"/><rect x="951.9" y="343.4" width="2" height="2" fill="#303038"/><rect x="946.5" y="377.75" width="2" height="2" fill="#303038"/><rect x="929" y="377.75" width="2" height="2" fill="#303038"/><rect x="923.8" y="343.4" width="2" height="2" fill="#303038"/><rect x="923.2" y="378.8" width="2" height="2" fill="#303038"/><rect x="905.5" y="378.8" width="2" height="2" fill="#303038"/><rect x="899.8" y="335" width="2" height="2" fill="#303038"/><rect x="715.25" y="248.4" width="2" height="2" fill="#303038"/><rect x="745.9" y="249.3" width="2" height="2" fill="#303038"/><rect x="775.6" y="247.75" width="2" height="2" fill="#303038"/><rect x="772.4" y="257.75" width="2" height="2" fill="#303038"/><rect x="719.3" y="258.7" width="2" height="2" fill="#303038"/><rect x="725" y="265" width="2" height="2" fill="#303038"/><rect x="777.75" y="265" width="2" height="2" fill="#303038"/><rect x="777.75" y="270.25" width="2" height="2" fill="#303038"/><rect x="725" y="270.25" width="2" height="2" fill="#303038"/><rect x="740" y="270.25" width="2" height="2" fill="#303038"/><rect x="756" y="270.25" width="2" height="2" fill="#303038"/><rect x="769" y="270.25" width="2" height="2" fill="#303038"/><rect x="635" y="389.2" width="2" height="2" fill="#303038"/><rect x="671.3" y="389.2" width="2" height="2" fill="#303038"/><rect x="671.3" y="397.3" width="2" height="2" fill="#303038"/><rect x="635" y="397.3" width="2" height="2" fill="#303038"/><rect x="853.4" y="389.2" width="2" height="2" fill="#303038"/><rect x="888.8" y="389.2" width="2" height="2" fill="#303038"/><rect x="888.8" y="396.9" width="2" height="2" fill="#303038"/><rect x="853.4" y="396.9" width="2" height="2" fill="#303038"/><rect x="676.8" y="404.5" width="2" height="2" fill="#303038"/><rect x="779.6" y="404.5" width="2" height="2" fill="#303038"/><rect x="779.6" y="413.5" width="2" height="2" fill="#303038"/><rect x="676.8" y="413.5" width="2" height="2" fill="#303038"/><rect x="677" y="439" width="2" height="2" fill="#303038"/><rect x="983" y="439" width="2" height="2" fill="#303038"/><rect x="983" y="532" width="2" height="2" fill="#303038"/><rect x="677" y="532" width="2" height="2" fill="#303038"/><rect x="689.0" y="413.5" width="2" height="2" fill="#303038"/><rect x="701.7" y="413.5" width="2" height="2" fill="#303038"/><rect x="714.4" y="413.5" width="2" height="2" fill="#303038"/><rect x="727.1" y="413.5" width="2" height="2" fill="#303038"/><rect x="739.8" y="413.5" width="2" height="2" fill="#303038"/><rect x="752.5" y="413.5" width="2" height="2" fill="#303038"/><rect x="765.2" y="413.5" width="2" height="2" fill="#303038"/><rect x="777.9" y="413.5" width="2" height="2" fill="#303038"/>
</svg>
<div class="a" style="left:1080px;top:27px;width:200px;height:675px;background:#2e2e31;"></div>
<div class="a" style="left:1080px;top:27px;width:200px;height:13px;background:linear-gradient(#2a2a2d,#232326);"></div>
<svg class="a" style="left:1082px;top:29px" width="10" height="9"><path d="M2 4.5h3M4.5 2.5l2.5 2-2.5 2z" stroke="#d0d0d0" fill="#d0d0d0" stroke-width="1"/></svg>
<span class="t" style="left:1079.5px;width:200px;text-align:center;top:30.42px;font-size:7.3px;color:#b0b0b2;">Object Browser</span>
<svg class="a" style="left:1267px;top:29px" width="10" height="9"><rect x="1.5" y="3.5" width="6" height="4.5" fill="none" stroke="#8a8a8c"/><path d="M6 1.5h3v3" stroke="#8a8a8c" fill="none" stroke-width="0.8"/></svg>
<div class="a" style="left:1080px;top:40px;width:200px;height:13px;background:#29292c;"></div>
<div class="a" style="left:1080px;top:40px;width:33px;height:12px;background:#252528;"></div>
<span class="t" style="left:996.5px;width:200px;text-align:center;top:43.41px;font-size:7.2px;color:#6e6e70;">Scene</span>
<div class="a" style="left:1114px;top:40px;width:33px;height:12px;background:#343437;"></div>
<span class="t" style="left:1030.5px;width:200px;text-align:center;top:43.41px;font-size:7.2px;color:#f0f0f0;">Fabric</span>
<div class="a" style="left:1148px;top:40px;width:33px;height:12px;background:#252528;"></div>
<span class="t" style="left:1064.5px;width:200px;text-align:center;top:43.41px;font-size:7.2px;color:#6e6e70;">Button</span>
<div class="a" style="left:1182px;top:40px;width:48px;height:12px;background:#252528;"></div>
<span class="t" style="left:1106.0px;width:200px;text-align:center;top:43.41px;font-size:7.2px;color:#6e6e70;">Buttonhole</span>
<div class="a" style="left:1231px;top:51.5px;width:49px;height:1.5px;background:#a0a0a2;"></div>
<div class="a" style="left:1080px;top:53px;width:200px;height:175px;background:#2e2e31;"></div>
<div class="a" style="left:1163.5px;top:64px;width:30.5px;height:13px;background:#2a2a2d;border:1px solid #232325;"></div>
<div class="a" style="left:1195.4px;top:64px;width:34.6px;height:13px;background:#2a2a2d;border:1px solid #232325;"></div>
<div class="a" style="left:1233px;top:64px;width:43.5px;height:13px;background:#2a2a2d;border:1px solid #232325;"></div>
<svg class="a" style="left:1168px;top:67px" width="8" height="8"><path d="M4 0.5v7M0.5 4h7" stroke="#c0c0c0" stroke-width="1"/></svg>
<span class="t" style="left:1176.5px;top:67.62px;font-size:7.3px;color:#c8c8ca;">Add</span>
<svg class="a" style="left:1200px;top:66px" width="8" height="9"><rect x="1" y="2" width="6" height="6" fill="none" stroke="#555" stroke-width="1"/></svg>
<span class="t" style="left:1209px;top:67.62px;font-size:7.3px;color:#5a5a5c;">Copy</span>
<svg class="a" style="left:1237px;top:65px" width="10" height="10"><rect x="1" y="3" width="6" height="6" fill="#606062"/><path d="M6 1h3v3" stroke="#606062" fill="none"/></svg>
<span class="t" style="left:1249px;top:67.62px;font-size:7.3px;color:#5a5a5c;">Assign</span>
<div class="a" style="left:1088px;top:82.5px;width:182px;height:1px;background:#39393c;"></div>
<div class="a" style="left:1112px;top:86.4px;width:24.5px;height:24.3px;background:#dcdcde;"></div>
<span class="t" style="left:1142.7px;top:94.42px;font-size:7.3px;color:#c8c8ca;">Default Fabric</span>
<div class="a" style="left:1112px;top:115.5px;width:24.5px;height:24.3px;background:#dcdcde;"></div>
<span class="t" style="left:1142.7px;top:123.72px;font-size:7.3px;color:#c8c8ca;">starchy</span>
<div class="a" style="left:1112px;top:144.4px;width:24.5px;height:24.3px;background:#b4b4dc;"></div>
<span class="t" style="left:1142.7px;top:152.82px;font-size:7.3px;color:#c8c8ca;">cotton</span>
<div class="a" style="left:1112px;top:173.9px;width:24.5px;height:24.3px;background:#7a7a7c;"></div>
<span class="t" style="left:1142.7px;top:181.72px;font-size:7.3px;color:#c8c8ca;">wool 1</span>
<div class="a" style="left:1088px;top:112.5px;width:182px;height:1px;background:#39393c;"></div>
<div class="a" style="left:1088px;top:141.8px;width:182px;height:1px;background:#39393c;"></div>
<div class="a" style="left:1088px;top:171px;width:182px;height:1px;background:#39393c;"></div>
<div class="a" style="left:1088px;top:200.3px;width:182px;height:1px;background:#39393c;"></div>
<svg class="a" style="left:1094px;top:93px" width="10" height="8"><path d="M1 4l2.5 2.5L9 1" stroke="#f2b818" stroke-width="2" fill="none"/></svg>
<div class="a" style="left:1080px;top:227px;width:200px;height:3px;background:#232326;"></div>
<div class="a" style="left:1080px;top:231px;width:200px;height:14px;background:linear-gradient(#2a2a2d,#232326);"></div>
<svg class="a" style="left:1082px;top:233px" width="10" height="9"><path d="M2 4.5h3M4.5 2.5l2.5 2-2.5 2z" stroke="#d0d0d0" fill="#d0d0d0" stroke-width="1"/></svg>
<span class="t" style="left:1079px;width:200px;text-align:center;top:234.82px;font-size:7.3px;color:#b0b0b2;">Property Editor</span>
<svg class="a" style="left:1267px;top:234px" width="10" height="9"><rect x="1.5" y="3.5" width="6" height="4.5" fill="none" stroke="#8a8a8c"/><path d="M6 1.5h3v3" stroke="#8a8a8c" fill="none" stroke-width="0.8"/></svg>
<div class="a" style="left:1080px;top:245px;width:200px;height:262px;background:#2e2e31;"></div>
<div class="a" style="left:1080px;top:506px;width:200px;height:4px;background:#232326;"></div>
<div class="a" style="left:1080px;top:510px;width:200px;height:12px;background:linear-gradient(#2a2a2d,#232326);"></div>
<svg class="a" style="left:1082px;top:511px" width="10" height="9"><path d="M2 4.5h3M4.5 2.5l2.5 2-2.5 2z" stroke="#d0d0d0" fill="#d0d0d0" stroke-width="1"/></svg>
<span class="t" style="left:1079px;width:200px;text-align:center;top:513.32px;font-size:7.3px;color:#b0b0b2;">History</span>
<svg class="a" style="left:1267px;top:512px" width="10" height="9"><rect x="1.5" y="3.5" width="6" height="4.5" fill="none" stroke="#8a8a8c"/><path d="M6 1.5h3v3" stroke="#8a8a8c" fill="none" stroke-width="0.8"/></svg>
<div class="a" style="left:1080px;top:522px;width:200px;height:23px;background:#2e2e31;"></div>
<span class="t" style="left:1084px;top:531.05px;font-size:7.5px;color:#ececee;">3D State</span>
<svg class="a" style="left:1262px;top:528px" width="14" height="12"><rect x="0.5" y="0.5" width="13" height="11" fill="#3a3a3d" stroke="#444"/><path d="M3 5l2-2h4l2 2-1 1.5-.8-.4V9H4.8V6.1L4 6.5z" fill="#a0a0a2"/></svg>
<div class="a" style="left:1080px;top:545px;width:200px;height:1px;background:#242427;"></div>
<div class="a" style="left:1087.8px;top:549.7px;width:26.5px;height:26.6px;background:radial-gradient(circle at 50% 40%,#4e4e52,#2e2e31);border:1px solid #3e3e41;"></div>
<svg class="a" style="left:1088px;top:550px" width="26" height="26"><rect x="0" y="0" width="26" height="26" fill="#3a3a3e"/><path d="M0 17 L26 15 V26 H0z" fill="#5a5a5e"/><circle cx="13" cy="6" r="1.8" fill="#b08060"/><path d="M10.5 8.5h5l1.5 5h-8z" fill="#c8a0d8"/><path d="M9.5 13.5h7l1 5h-9z" fill="#b05a7a"/><path d="M11 18.5v4M15 18.5v4" stroke="#a87a50"/><path d="M10 9l-2 5M16 9l2 5" stroke="#b08060"/></svg>
<span class="t" style="left:1120.7px;top:559.82px;font-size:7.3px;color:#d8d8da;">3D State_1</span>
<div class="a" style="left:1080px;top:581px;width:200px;height:1px;background:#242427;"></div>
<div class="a" style="left:1080px;top:588.4px;width:200px;height:20px;background:#3c3c3f;"></div>
<svg class="a" style="left:1087px;top:592px" width="12" height="12"><path d="M2 2l4 3.5L10 2M2 6.5l4 3.5 4-3.5" stroke="#e0e0e0" fill="none" stroke-width="1.3"/></svg>
<svg class="a" style="left:1103px;top:593px" width="11" height="9"><path d="M0.5 1.5h4l1 1.5h5v5.5h-10z" fill="#c8c8c8"/></svg>
<span class="t" style="left:1117.5px;top:595.65px;font-size:7.5px;color:#ececee;">Open</span>
<div class="a" style="left:1080px;top:27px;width:200px;height:201px;background:transparent;border:1px solid #3a3a3d;"></div>
<div class="a" style="left:1080px;top:231px;width:200px;height:276px;background:transparent;border:1px solid #3a3a3d;"></div>
<div class="a" style="left:1080px;top:510px;width:200px;height:192px;background:transparent;border:1px solid #3a3a3d;"></div>
<div class="a" style="left:0px;top:702px;width:1280px;height:16px;background:#2f2f32;"></div>
<div class="a" style="left:0px;top:718px;width:1280px;height:2px;background:#19191b;"></div>
<span class="t" style="left:8px;top:705.50px;font-size:6.5px;color:#5a5a5d;">Version: 2.5.73</span>
<span class="t" style="left:62px;top:705.50px;font-size:6.5px;color:#5a5a5d;">(r20490)</span>
<svg class="a" style="left:1080px;top:640px" width="200" height="62" viewBox="1080 640 200 62">
<g fill="none" stroke="#48484c" stroke-width="3" stroke-linejoin="round">
<path transform="translate(1130,653) scale(1.05,1)" d="M18 3 H5 Q2 3 2 6 V19 Q2 22 5 22 H15 Q18 22 18 19 V13 H11"/>
<path transform="translate(1152.6,653) scale(1.05,1)" d="M2 22 V6 Q2 3 5 3 H15 Q18 3 18 6 V22"/>
<path transform="translate(1175.1999999999998,653) scale(1.05,1)" d="M5 3 H15 Q18 3 18 6 V19 Q18 22 15 22 H5 Q2 22 2 19 V6 Q2 3 5 3Z"/>
<path transform="translate(1197.7999999999997,653) scale(1.05,1)" d="M2 22 V6 Q2 3 5 3 H15 Q18 3 18 6 V22 M10 3 V22"/>
<path transform="translate(1220.3999999999996,653) scale(1.05,1)" d="M5 3 H15 Q18 3 18 6 V19 Q18 22 15 22 H5 Q2 22 2 19 V6 Q2 3 5 3Z"/>
<path transform="translate(1242.9999999999995,653) scale(1.05,1)" d="M2 22 V6 Q2 3 5 3 H15 Q18 3 18 6 V22"/>
<path transform="translate(1116,683) scale(1,1.05)" d="M2 2 V15 Q2 18 5 18 H13 Q16 18 16 15 V2 M9 8 V18"/>
<path transform="translate(1134.6,683) scale(1,1.05)" d="M5 2 H13 Q16 2 16 5 V15 Q16 18 13 18 H5 Q2 18 2 15 V5 Q2 2 5 2Z"/>
<path transform="translate(1153.1999999999998,683) scale(1,1.05)" d="M2 19 V2 H13 Q16 2 16 5 V8 Q16 11 13 11 H2 M9 11 L16 19"/>
<path transform="translate(1171.7999999999997,683) scale(1,1.05)" d="M2 2 V19 M2 10 H7 L15 2 M7 10 L16 19"/>
<path transform="translate(1190.3999999999996,683) scale(1,1.05)" d="M16 2 H5 Q2 2 2 5 V7 Q2 10 5 10 H13 Q16 10 16 13 V15 Q16 18 13 18 H2"/>
<path transform="translate(1208.9999999999995,683) scale(1,1.05)" d="M2 2 V19 M16 2 V19 M2 10 H16"/>
<path transform="translate(1227.5999999999995,683) scale(1,1.05)" d="M5 2 H13 Q16 2 16 5 V15 Q16 18 13 18 H5 Q2 18 2 15 V5 Q2 2 5 2Z"/>
<path transform="translate(1246.1999999999994,683) scale(1,1.05)" d="M2 19 V2 H13 Q16 2 16 5 V8 Q16 11 13 11 H2"/>
</g>
<text transform="translate(1127,677) rotate(-90)" font-family="Liberation Sans" font-size="12" fill="#4a4a4e" letter-spacing="0.3">THE</text>
<path d="M1100 653 Q1093 662 1086 676 Q1081 686 1081 697 L1104 697 Q1111 694 1111 688 Q1110 680 1100 677 Q1094 676 1091 678 Q1094 665 1100 653Z" fill="#4a4a4e"/>
<ellipse cx="1095" cy="687.5" rx="7.5" ry="3.2" fill="#2e2e31" transform="rotate(-8 1095 687.5)"/>
</svg>
<svg class="a" style="left:1194px;top:704px" width="84" height="14"><rect x="2.5" y="2.5" width="13" height="10" fill="none" stroke="#8a8a8c" stroke-width="1"/><line x1="9" y1="2.5" x2="9" y2="12.5" stroke="#8a8a8c"/><rect x="21.5" y="2.5" width="13" height="10" fill="none" stroke="#8a8a8c"/><text x="28" y="10.5" font-size="7" font-weight="bold" text-anchor="middle" fill="#8a8a8c" font-family="Liberation Sans">3D</text><rect x="40.5" y="2.5" width="13" height="10" fill="none" stroke="#8a8a8c"/><text x="47" y="10.5" font-size="7" font-weight="bold" text-anchor="middle" fill="#8a8a8c" font-family="Liberation Sans">2D</text><rect x="65.5" y="1" width="13" height="12" fill="#1e1e20" stroke="#3a3a3c"/><path d="M75 5 A3.2 3.2 0 1 0 75.5 8" stroke="#e0e0e0" fill="none" stroke-width="1.4"/><path d="M73.5 3.5 L76.5 4.5 L75 7z" fill="#e0e0e0"/></svg>
</body></html>
